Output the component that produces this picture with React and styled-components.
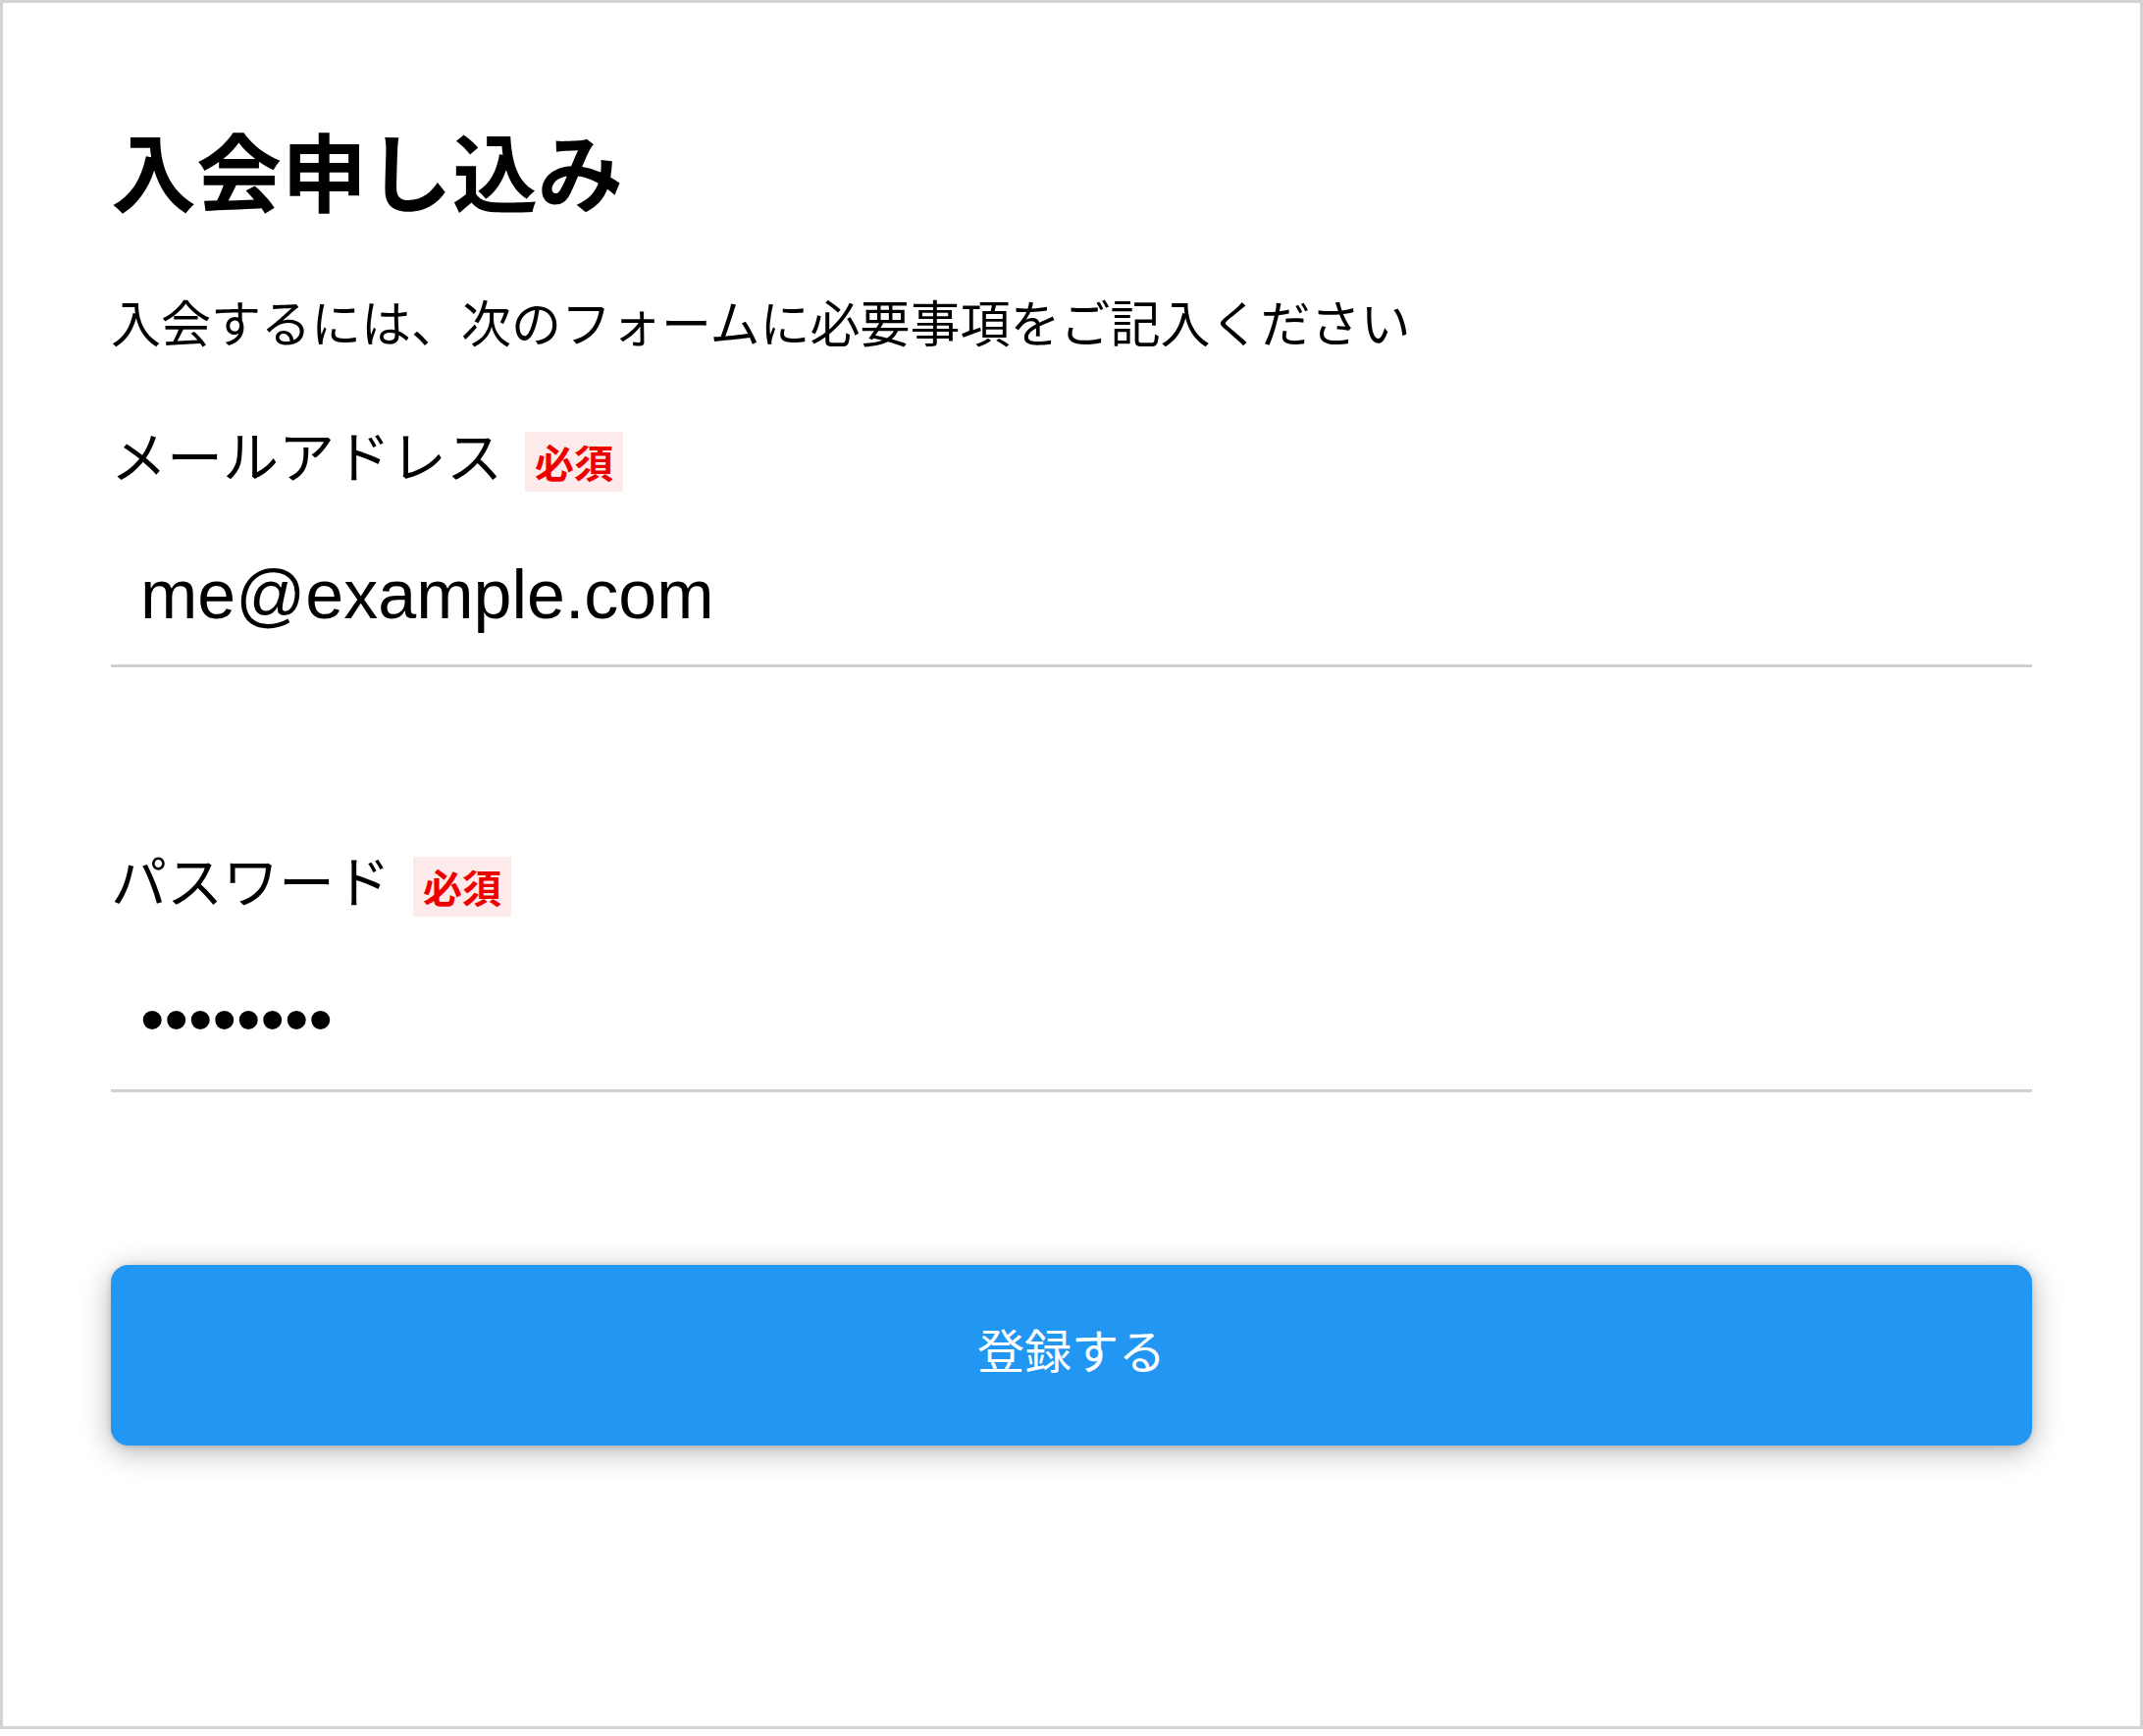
import React from 'react';
import styled, { createGlobalStyle } from 'styled-components';

const GlobalStyle = createGlobalStyle`
  html, body {
    margin: 0;
    padding: 0;
    background: #ffffff;
  }
  * { box-sizing: border-box; }
`;

const Card = styled.div`
  width: 2184px;
  border: 3px solid #d3d3d3;
  background: #ffffff;
  padding: 117px 110px 286px 110px;
  display: flex;
  flex-direction: column;
  font-family: "Noto Sans CJK JP", "Noto Sans", sans-serif;
  color: #000;
`;

const Title = styled.h1`
  font-size: 87px;
  line-height: 105px;
  font-weight: 700;
  margin: 0;
`;

const Lead = styled.p`
  font-size: 51px;
  line-height: 76px;
  margin: 64px 0 0 0;
`;

const Field = styled.div`
  display: flex;
  flex-direction: column;
  margin-top: ${(p) => p.$gap}px;
`;

const LabelRow = styled.div`
  display: flex;
  align-items: baseline;
`;

const Label = styled.label`
  font-size: 57px;
  line-height: 85px;
`;

const Required = styled.span`
  margin-left: 23px;
  padding: 0 10px;
  font-size: 40px;
  line-height: 61px;
  font-weight: 700;
  color: #ee0000;
  background: #fdeaea;
`;

const Input = styled.input`
  margin-top: 30px;
  height: 145px;
  width: 100%;
  padding: 0 30px;
  border: none;
  border-bottom: 3px solid #d0d0d0;
  outline: none;
  background: transparent;
  font-family: "Liberation Sans", Arial, sans-serif;
  font-size: 70px;
  color: #000;
`;

const SubmitButton = styled.button`
  margin-top: 176px;
  height: 184px;
  width: 100%;
  padding: 0 0 14px 0;
  border: none;
  border-radius: 18px;
  background: #2196f3;
  color: #ffffff;
  font-family: "Noto Sans CJK JP", "Noto Sans", sans-serif;
  font-size: 48px;
  cursor: pointer;
  box-shadow: 0 6px 30px rgba(0, 0, 0, 0.3), 0 1px 6px rgba(0, 0, 0, 0.14);
`;

const App = () => {
  return (
    <>
      <GlobalStyle />
      <Card>
        <Title>入会申し込み</Title>
        <Lead>入会するには、次のフォームに必要事項をご記入ください</Lead>

        <Field $gap={55}>
          <LabelRow>
            <Label htmlFor="email">メールアドレス</Label>
            <Required>必須</Required>
          </LabelRow>
          <Input id="email" type="email" value="me@example.com" readOnly />
        </Field>

        <Field $gap={173}>
          <LabelRow>
            <Label htmlFor="password">パスワード</Label>
            <Required>必須</Required>
          </LabelRow>
          <Input id="password" type="password" value="12345678" readOnly />
        </Field>

        <SubmitButton type="button">登録する</SubmitButton>
      </Card>
    </>
  );
};

export default App;
